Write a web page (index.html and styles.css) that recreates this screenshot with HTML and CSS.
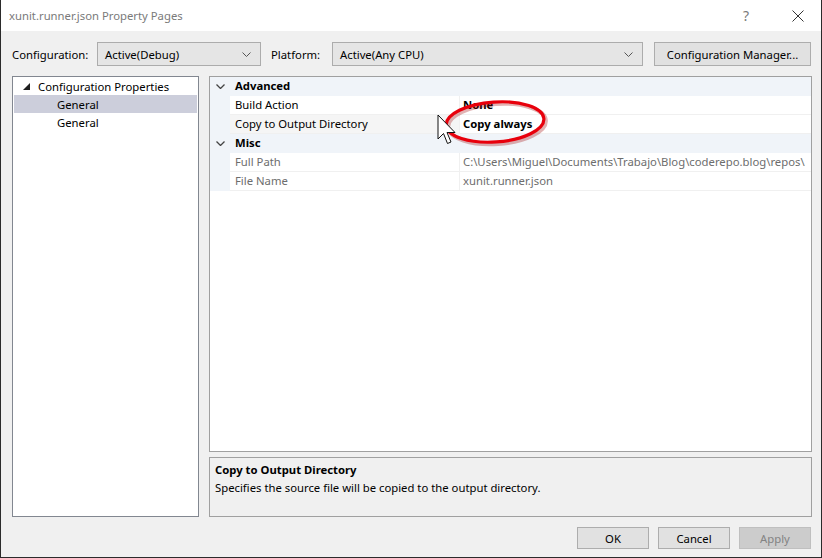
FILE: index.html
```html
<!DOCTYPE html>
<html lang="en">
    <head>
        <meta charset="UTF-8" />
        <title>xunit.runner.json Property Pages</title>
        <link rel="stylesheet" href="styles.css">
    </head>
    <body>
        <div class="window">
            <div class="titlebar">
                <span class="title">xunit.runner.json Property Pages</span>
                <span class="help">?</span>
                <svg class="close" width="12" height="12" viewBox="0 0 12 12">
                    <path d="M0.5 0.5 L11.5 11.5 M11.5 0.5 L0.5 11.5" stroke="#333" stroke-width="1" fill="none" />
                </svg>
            </div>

            <div class="toolbar">
                <label class="lbl-config">Configuration:</label>
                <div class="combo combo-config">
                    <span>Active(Debug)</span>
                    <svg width="9" height="5" viewBox="0 0 9 5"><path d="M0.5 0.5 L4.5 4.5 L8.5 0.5" stroke="#555" fill="none" /></svg>
                </div>
                <label class="lbl-platform">Platform:</label>
                <div class="combo combo-platform">
                    <span>Active(Any CPU)</span>
                    <svg width="9" height="5" viewBox="0 0 9 5"><path d="M0.5 0.5 L4.5 4.5 L8.5 0.5" stroke="#555" fill="none" /></svg>
                </div>
                <button class="btn btn-manager">Configuration Manager...</button>
            </div>

            <div class="content">
                <div class="tree">
                    <div class="tree-row">
                        <svg class="tree-arrow" width="7" height="7" viewBox="0 0 7 7"><polygon points="7,0 7,7 0,7" fill="#1e1e1e" /></svg>
                        <span>Configuration Properties</span>
                    </div>
                    <div class="tree-row child selected">General</div>
                    <div class="tree-row child">General</div>
                </div>

                <div class="right">
                    <div class="grid">
                        <div class="cat">
                            <div class="gutter"><svg width="9" height="5" viewBox="0 0 9 5"><path d="M0.5 0.5 L4.5 4.5 L8.5 0.5" stroke="#444" stroke-width="1.3" fill="none" /></svg></div>
                            <div class="cat-name">Advanced</div>
                        </div>
                        <div class="prop">
                            <div class="gutter"></div>
                            <div class="name">Build Action</div>
                            <div class="value bold">None</div>
                        </div>
                        <div class="prop selected">
                            <div class="gutter"></div>
                            <div class="name">Copy to Output Directory</div>
                            <div class="value bold">Copy always</div>
                        </div>
                        <div class="cat">
                            <div class="gutter"><svg width="9" height="5" viewBox="0 0 9 5"><path d="M0.5 0.5 L4.5 4.5 L8.5 0.5" stroke="#444" stroke-width="1.3" fill="none" /></svg></div>
                            <div class="cat-name">Misc</div>
                        </div>
                        <div class="prop readonly">
                            <div class="gutter"></div>
                            <div class="name">Full Path</div>
                            <div class="value">C:\Users\Miguel\Documents\Trabajo\Blog\coderepo.blog\repos\</div>
                        </div>
                        <div class="prop readonly">
                            <div class="gutter"></div>
                            <div class="name">File Name</div>
                            <div class="value">xunit.runner.json</div>
                        </div>

                        <svg class="ellipse" width="112" height="54" viewBox="0 0 112 54">
                            <ellipse cx="57" cy="28" rx="49" ry="20" fill="none" stroke="#a00000" stroke-opacity="0.3" stroke-width="4" transform="rotate(-4 57 28)" />
                            <ellipse cx="55" cy="26" rx="49" ry="20" fill="none" stroke="#e8000c" stroke-width="3.2" transform="rotate(-4 55 26)" />
                        </svg>
                        <svg class="cursor" width="20" height="32" viewBox="0 0 20 32">
                            <path d="M1 1 L1 25 L6.5 19.5 L10.5 29.5 L14 28 L10 18.5 L18 18.5 Z" fill="#fff" stroke="#111" stroke-width="1" stroke-linejoin="miter" />
                        </svg>
                    </div>

                    <div class="desc">
                        <div class="desc-title">Copy to Output Directory</div>
                        <div class="desc-text">Specifies the source file will be copied to the output directory.</div>
                    </div>
                </div>
            </div>

            <div class="footer">
                <button class="btn btn-ok">OK</button>
                <button class="btn btn-cancel">Cancel</button>
                <button class="btn btn-apply" disabled>Apply</button>
            </div>
        </div>
    </body>
</html>
```

FILE: styles.css
```css
* {
    margin: 0;
    padding: 0;
    box-sizing: border-box;
}

body {
    width: 822px;
    height: 558px;
    background-color: #2b2b2b;
    font-family: "Noto Sans", "Open Sans", sans-serif;
    font-size: 11.3px;
    color: #000;
    overflow: hidden;
}

.window {
    display: flex;
    flex-direction: column;
    width: 820px;
    height: 557px;
    margin-left: 1px;
    background-color: #f0f0f0;
}

.titlebar {
    display: flex;
    align-items: center;
    height: 31px;
    padding-left: 8px;
    background-color: #ffffff;
}

.title {
    flex: 1;
    color: #7a7a7a;
}

.help {
    width: 12px;
    margin-right: 37px;
    color: #7a7a7a;
    font-size: 14px;
}

.close {
    margin-right: 17px;
}

.toolbar {
    display: flex;
    align-items: center;
    height: 24px;
    margin-top: 11px;
    padding-left: 11px;
}

.lbl-config {
    width: 85px;
}

.lbl-platform {
    width: 61px;
    margin-left: 10px;
}

.combo {
    display: flex;
    align-items: center;
    justify-content: space-between;
    height: 24px;
    padding: 0 9px 0 7px;
    background-color: #e5e5e5;
    border: 1px solid #acacac;
}

.combo-config {
    width: 164px;
}

.combo-platform {
    width: 311px;
}

.btn {
    height: 24px;
    font-family: inherit;
    font-size: 11.3px;
    color: #000;
    background-color: #e1e1e1;
    border: 1px solid #adadad;
}

.btn-manager {
    width: 157px;
    margin-left: 11px;
}

.content {
    display: flex;
    height: 441px;
    margin-top: 10px;
    padding-left: 11px;
}

.tree {
    width: 187px;
    height: 441px;
    background-color: #ffffff;
    border: 1px solid #828790;
}

.tree-row {
    display: flex;
    align-items: center;
    height: 18px;
    margin: 0 1px;
    padding-left: 9px;
}

.tree-arrow {
    margin-right: 8px;
}

.tree-row.child {
    padding-left: 43px;
}

.tree-row.selected {
    background-color: #cccedb;
}

.right {
    display: flex;
    flex-direction: column;
    width: 603px;
    margin-left: 10px;
}

.grid {
    position: relative;
    height: 377px;
    background-color: #ffffff;
    border: 1px solid #a0a0a0;
    overflow: hidden;
}

.cat,
.prop {
    display: flex;
    height: 19px;
    line-height: 18px;
}

.cat {
    background-color: #f0f4f9;
}

.gutter {
    display: flex;
    align-items: center;
    justify-content: center;
    width: 20px;
    flex-shrink: 0;
    background-color: #f0f4f9;
}

.cat-name {
    padding-left: 5px;
    font-weight: bold;
}

.prop .name {
    width: 230px;
    flex-shrink: 0;
    padding-left: 5px;
    border-bottom: 1px solid #f0f0f0;
    border-right: 1px solid #f0f0f0;
}

.prop .value {
    flex: 1;
    padding-left: 3px;
    white-space: nowrap;
    overflow: hidden;
    border-bottom: 1px solid #f0f0f0;
}

.prop.selected .name {
    background-color: #f5f5f5;
}

.bold {
    font-weight: bold;
}

.readonly .name,
.readonly .value {
    color: #6d6d6d;
}

.ellipse {
    position: absolute;
    left: 230px;
    top: 19px;
}

.cursor {
    position: absolute;
    left: 227px;
    top: 37px;
}

.desc {
    height: 60px;
    margin-top: 5px;
    padding: 3px 5px;
    border: 1px solid #a0a0a0;
    background-color: #f0f0f0;
}

.desc-title {
    font-weight: bold;
    line-height: 18px;
}

.desc-text {
    line-height: 18px;
}

.footer {
    display: flex;
    justify-content: flex-end;
    margin-top: 10px;
    padding-right: 10px;
}

.footer .btn {
    width: 72px;
    height: 22px;
    margin-left: 9px;
}

.btn-apply {
    color: #838383;
    background-color: #cccccc;
    border-color: #bfbfbf;
}
```
